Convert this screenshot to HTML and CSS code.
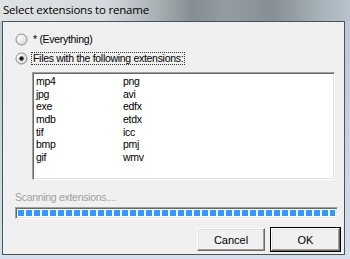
FILE: index.html
```html
<!DOCTYPE html>
<html>
<head>
<meta charset="utf-8">
<link rel="stylesheet" href="styles.css">
</head>
<body>
<div class="window">
  <div class="titlebar"><span class="title">Select extensions to rename</span></div>
  <div class="client">
    <label class="radio-row first">
      <svg class="radio" width="13" height="13" viewBox="0 0 13 13"><defs><radialGradient id="rg1" cx="0.35" cy="0.35" r="0.7"><stop offset="0" stop-color="#ffffff"/><stop offset="1" stop-color="#d6d6d6"/></radialGradient></defs><circle cx="6.5" cy="6.5" r="5.5" fill="url(#rg1)" stroke="#8a8a8a" stroke-width="1"/></svg>
      <span class="label">* (Everything)</span>
    </label>
    <label class="radio-row second">
      <svg class="radio" width="13" height="13" viewBox="0 0 13 13"><defs><radialGradient id="rg2" cx="0.35" cy="0.35" r="0.7"><stop offset="0" stop-color="#ffffff"/><stop offset="1" stop-color="#d6d6d6"/></radialGradient></defs><circle cx="6.5" cy="6.5" r="5.5" fill="url(#rg2)" stroke="#8a8a8a" stroke-width="1"/><circle cx="6.5" cy="6.5" r="2.2" fill="#1e1e1e"/></svg>
      <span class="label focus">Files with the following extensions:</span>
    </label>
    <div class="listbox">
      <div class="col">
        <div class="item">mp4</div>
        <div class="item">jpg</div>
        <div class="item">exe</div>
        <div class="item">mdb</div>
        <div class="item">tif</div>
        <div class="item">bmp</div>
        <div class="item">gif</div>
      </div>
      <div class="col">
        <div class="item">png</div>
        <div class="item">avi</div>
        <div class="item">edfx</div>
        <div class="item">etdx</div>
        <div class="item">icc</div>
        <div class="item">pmj</div>
        <div class="item">wmv</div>
      </div>
    </div>
    <div class="status">Scanning extensions....</div>
    <div class="progress"><div class="fill"></div></div>
    <div class="buttons">
      <button class="btn">Cancel</button>
      <button class="btn default">OK</button>
    </div>
  </div>
</div>
</body>
</html>
```
FILE: styles.css
```css
html, body {
  margin: 0;
  padding: 0;
}
body {
  width: 350px;
  height: 259px;
  overflow: hidden;
  background: #c9d9ea;
  font-family: "Liberation Sans", Arial, sans-serif;
}
.window {
  width: 350px;
  height: 259px;
  display: flex;
  flex-direction: column;
  background: linear-gradient(180deg, #b9c6d2 0%, #d3dfea 100%);
}
.titlebar {
  height: 21px;
  flex: none;
  display: flex;
  align-items: center;
  padding-left: 3px;
  background: linear-gradient(90deg, #dfe3e6 0%, #d4d9dc 30%, #a9b0b4 45%, #858e93 55%, #949da2 65%, #868f95 78%, #a4aeb5 90%, #b8c3cb 100%);
}
.title {
  font-family: "Open Sans", "Noto Sans", sans-serif;
  font-size: 11.5px;
  color: #000;
  letter-spacing: -0.2px;
  margin-top: -3px;
}
.client {
  flex: none;
  width: 343px;
  height: 234px;
  margin-left: 2px;
  background: #f0f0f0;
  border: 1px solid #4b5359;
  display: flex;
  flex-direction: column;
  padding-left: 12px;
  box-sizing: border-box;
  font-size: 10.5px;
  letter-spacing: -0.3px;
  color: #000;
}
.radio-row {
  display: flex;
  align-items: center;
  height: 13px;
  gap: 3px;
}
.radio-row.first {
  margin-top: 11px;
}
.radio-row.second {
  margin-top: 6px;
}
.radio {
  flex: none;
}
.label {
  line-height: 11px;
  padding: 0 1px;
  border: 1px solid transparent;
}
.label.focus {
  border: 1px dotted #333;
}
.listbox {
  margin-top: 7px;
  margin-left: 17px;
  width: 303px;
  height: 108px;
  flex: none;
  box-sizing: border-box;
  background: #fff;
  border: 1px solid;
  border-color: #a0a0a0 #ffffff #ffffff #a0a0a0;
  box-shadow: inset 1px 1px 0 #696969, inset -1px -1px 0 #e3e3e3;
  display: flex;
  padding: 2px 0 0 3px;
}
.col {
  width: 87px;
  display: flex;
  flex-direction: column;
}
.item {
  height: 12.7px;
  line-height: 13px;
}
.status {
  margin-top: 10px;
  color: #a0a0a0;
  height: 14px;
  line-height: 14px;
}
.progress {
  margin-top: 3px;
  width: 323px;
  height: 12px;
  flex: none;
  box-sizing: border-box;
  border: 1px solid;
  border-color: #a0a0a0 #ffffff #ffffff #a0a0a0;
  box-shadow: inset 1px 1px 0 #696969, inset -1px -1px 0 #e3e3e3;
  background: #fff;
  padding: 2px;
}
.fill {
  height: 100%;
  width: 100%;
  background: repeating-linear-gradient(90deg, #3399ff 0, #3399ff 6px, #ffffff 6px, #ffffff 8px);
}
.buttons {
  margin-top: 9px;
  display: flex;
  gap: 6px;
  padding-left: 182px;
}
.btn {
  width: 68px;
  height: 23px;
  box-sizing: border-box;
  font-family: "Liberation Sans", Arial, sans-serif;
  font-size: 11px;
  color: #000;
  background: #f0f0f0;
  border: 1px solid;
  border-color: #ffffff #696969 #696969 #ffffff;
  box-shadow: inset -1px -1px 0 #a0a0a0, inset 1px 1px 0 #e3e3e3;
  padding: 0;
  margin: 0;
}
.btn.default {
  width: 69px;
  outline: 1px solid #000;
  outline-offset: 0;
}
```
